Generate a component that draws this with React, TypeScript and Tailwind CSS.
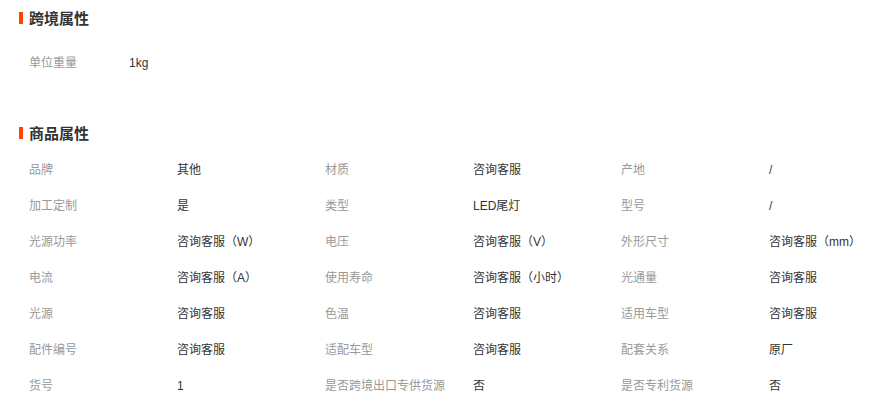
import React from "react";

const rows: [string, string][][] = [
  [["品牌", "其他"], ["材质", "咨询客服"], ["产地", "/"]],
  [["加工定制", "是"], ["类型", "LED尾灯"], ["型号", "/"]],
  [["光源功率", "咨询客服（W）"], ["电压", "咨询客服（V）"], ["外形尺寸", "咨询客服（mm）"]],
  [["电流", "咨询客服（A）"], ["使用寿命", "咨询客服（小时）"], ["光通量", "咨询客服"]],
  [["光源", "咨询客服"], ["色温", "咨询客服"], ["适用车型", "咨询客服"]],
  [["配件编号", "咨询客服"], ["适配车型", "咨询客服"], ["配套关系", "原厂"]],
  [["货号", "1"], ["是否跨境出口专供货源", "否"], ["是否专利货源", "否"]],
];

function Title({ text }: { text: string }) {
  return (
    <div className="h-[36px] flex items-center pl-[19px]">
      <div className="w-[4px] h-[12px] bg-[#ff4400]" />
      <div className="ml-[6px] pt-[2px] text-[15px] font-bold text-[#333]">{text}</div>
    </div>
  );
}

export default function App() {
  return (
    <div
      className="w-[876px] h-[399px] bg-white overflow-hidden"
      style={{ fontFamily: '"Liberation Sans", "Noto Sans CJK SC", sans-serif' }}
    >
      <Title text="跨境属性" />
      <div className="mt-[8px] h-[36px] pt-[2px] flex items-center pl-[29px] text-[12px]">
        <div className="w-[100px] text-[#999]">单位重量</div>
        <div className="text-[#333]">1kg</div>
      </div>
      <div className="mt-[35px]">
        <Title text="商品属性" />
      </div>
      <div className="pl-[29px] grid grid-cols-[148px_148px_148px_148px_148px_1fr] text-[12px]">
        {rows.map((r, i) =>
          r.map(([k, v], j) => (
            <React.Fragment key={`${i}-${j}`}>
              <div className="h-[36px] pt-[2px] flex items-center text-[#999] whitespace-nowrap">{k}</div>
              <div className="h-[36px] pt-[2px] flex items-center text-[#333] whitespace-nowrap">{v}</div>
            </React.Fragment>
          ))
        )}
      </div>
    </div>
  );
}
